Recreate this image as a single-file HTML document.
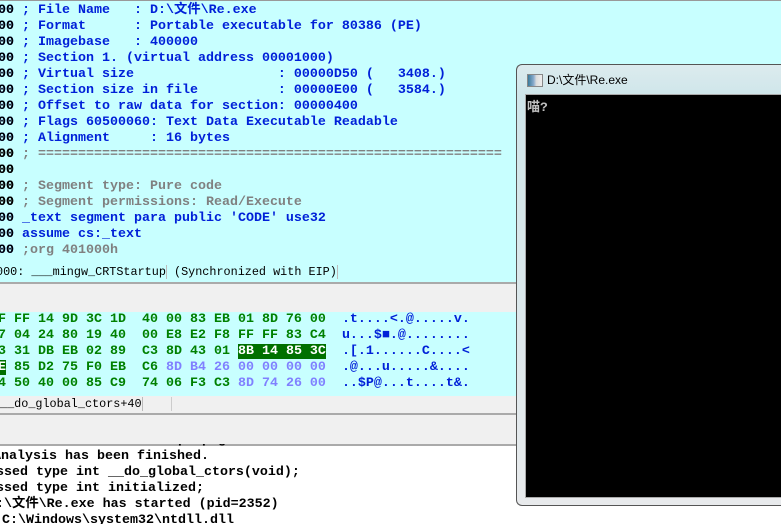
<!DOCTYPE html>
<html><head><meta charset="utf-8"><style>
html,body{margin:0;width:781px;height:524px;overflow:hidden;}
body{position:relative;background:#fff;font-family:"Liberation Mono","Noto Sans CJK SC",monospace;}
#w{position:absolute;left:0;top:0;width:781px;height:524px;overflow:hidden}
.p{position:absolute;left:0;width:781px;overflow:hidden}
.l{position:absolute;white-space:pre;font-size:13.33px;font-weight:bold;line-height:16px;}
.b{color:#0020d8}.g{color:#808080}.k{color:#000}.gr{color:#008000}.lb{color:#8080ff}
.n{font-weight:normal;font-size:11.8px}
</style></head><body><div id="w">
<div class="p" style="top:0;height:262px;background:#c8ffff;border-top:1px solid #999"></div>
<div class="l b" style="left:-2px;top:3px">00 ; File Name   : D:\文件\Re.exe
00 ; Format      : Portable executable for 80386 (PE)
00 ; Imagebase   : 400000
00 ; Section 1. (virtual address 00001000)
00 ; Virtual size                  : 00000D50 (   3408.)
00 ; Section size in file          : 00000E00 (   3584.)
00 ; Offset to raw data for section: 00000400
00 ; Flags 60500060: Text Data Executable Readable
00 ; Alignment     : 16 bytes</div>
<div class="l g" style="left:-2px;top:147px">00 ; ==========================================================
00
00 ; Segment type: Pure code
00 ; Segment permissions: Read/Execute</div>
<div class="l k" style="left:-2px;top:147px">00
00
00
00</div>
<div class="l b" style="left:-2px;top:211px">00 _text segment para public 'CODE' use32
00 assume cs:_text
00 <span class="g">;org 401000h</span></div>
<div class="l k" style="left:-2px;top:3px">00
00
00
00
00
00
00
00
00
00
00
00
00
00
00
00</div>
<div class="p" style="top:262px;height:20px;background:#c8ffff"></div>
<div class="l k n" style="left:-4px;top:264px">000: ___mingw_CRTStartup<span style="border-left:1px solid #bbb"> (Synchronized with EIP)</span><span style="border-left:1px solid #bbb"> </span></div>
<div class="p" style="top:282px;height:29px;background:#f0f0f0;border-top:2px solid #aaa;border-bottom:1px solid #999"></div>
<div class="p" style="top:312px;height:84px;background:#c8ffff"></div>
<div class="l gr" style="left:-2px;top:312px">F FF 14 9D 3C 1D  40 00 83 EB 01 8D 76 00  <span class="b">.t....&lt;.@.....v.</span>
7 04 24 80 19 40  00 E8 E2 F8 FF FF 83 C4  <span class="b">u...$■.@........</span>
3 31 DB EB 02 89  C3 8D 43 01 <span style="background:#007000;color:#fff">8B 14 85 3C</span>  <span class="b">.[.1......C....&lt;</span>
<span style="background:#007000;color:#fff">E</span> 85 D2 75 F0 EB  C6 <span class="lb">8D B4 26 00 00 00 00</span>  <span class="b">.@...u.....&amp;....</span>
4 50 40 00 85 C9  74 06 F3 C3 <span class="lb">8D 74 26 00</span>  <span class="b">..$P@...t....t&amp;.</span></div>
<div class="p" style="top:396px;height:17px;background:#f0f0f0"></div>
<div class="l k n" style="left:0;top:396px">__do_global_ctors+40<span style="border-left:1px solid #bbb">    </span><span style="border-left:1px solid #ccc"> </span></div>
<div class="p" style="top:413px;height:29px;background:#f0f0f0;border-top:2px solid #aaa;border-bottom:2px solid #aaa"></div>
<div class="l k" style="left:-6px;top:433px;clip-path:inset(11px 0 0 0)">  information has been propagated</div>
<div class="l k" style="left:-7px;top:449px">Analysis has been finished.</div>
<div class="l k" style="left:-44px;top:465px">Processed type int __do_global_ctors(void);</div>
<div class="l k" style="left:-44px;top:481px">Processed type int initialized;</div>
<div class="l k" style="left:-12px;top:497px">D:\文件\Re.exe has started (pid=2352)</div>
<div class="l k" style="left:2px;top:513px">C:\Windows\system32\ntdll.dll</div>
<div style="position:absolute;left:516px;top:64px;width:264px;height:440px;background:linear-gradient(#dcebee,#cfe6ea 30px,#e8eaec);border:1px solid #555;border-right:none;border-radius:6px 0 0 6px;"></div>
<div style="position:absolute;left:527px;top:74px;width:14px;height:11px;background:linear-gradient(90deg,#3a7a9a,#8ac 40%,#ddd 60%,#eee);border:1px solid #888"></div>
<div style="position:absolute;left:547px;top:71px;font:12px 'Liberation Sans','Noto Sans CJK SC',sans-serif;color:#000">D:\文件\Re.exe</div>
<div style="position:absolute;left:525px;top:94px;width:256px;height:402px;background:#000;border:1px solid #aaa;border-right:none"></div>
<div style="position:absolute;left:527px;top:96px;font:bold 13px 'Liberation Mono','Noto Sans CJK SC',monospace;color:#c0c0c0">喵?</div>
</div></body></html>
